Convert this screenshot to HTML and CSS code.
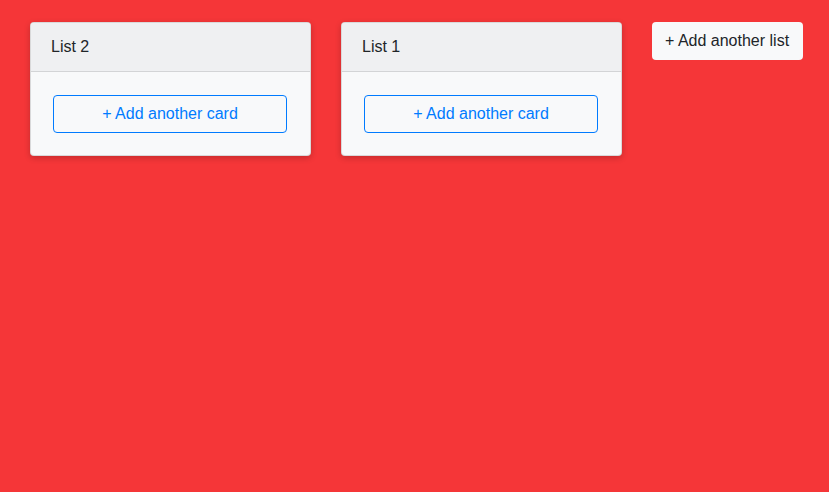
FILE: index.html
```html
<!DOCTYPE html>
<html>
<head>
<meta charset="utf-8">
<link rel="stylesheet" href="styles.css">
</head>
<body>
<div class="board">
  <div class="list">
    <div class="list-header">List 2</div>
    <div class="list-body">
      <button class="add-card">+ Add another card</button>
    </div>
  </div>
  <div class="list">
    <div class="list-header">List 1</div>
    <div class="list-body">
      <button class="add-card">+ Add another card</button>
    </div>
  </div>
  <button class="add-list">+ Add another list</button>
</div>
</body>
</html>
```
FILE: styles.css
```css
html, body {
  margin: 0;
  height: 100%;
}
body {
  background: #f53638;
  font-family: "Liberation Sans", Arial, sans-serif;
  font-size: 16px;
  color: #212529;
}
.board {
  display: flex;
  align-items: flex-start;
  gap: 30px;
  padding: 22px 30px;
}
.list {
  flex: 0 0 281px;
  width: 281px;
  box-sizing: border-box;
  background: #f8f9fa;
  border: 1px solid rgba(0,0,0,0.125);
  border-radius: 4px;
  box-shadow: 0 2px 6px rgba(0,0,0,0.2);
  overflow: hidden;
}
.list-header {
  background: #eff0f2;
  padding: 12px 20px;
  line-height: 24px;
  border-bottom: 1px solid #d3d4d6;
}
.list-body {
  padding: 23px 23px 22px 22px;
}
.add-card {
  display: block;
  width: 100%;
  height: 38px;
  box-sizing: border-box;
  border: 1px solid #007bff;
  border-radius: 4px;
  background: transparent;
  color: #007bff;
  font: inherit;
  line-height: 24px;
  padding: 6px 12px;
}
.add-list {
  flex: 0 0 auto;
  white-space: nowrap;
  height: 38px;
  padding: 6px 14px 6px 13px;
  border: none;
  border-radius: 4px;
  background: #f8f9fa;
  color: #212529;
  font: inherit;
  line-height: 24px;
}
```
